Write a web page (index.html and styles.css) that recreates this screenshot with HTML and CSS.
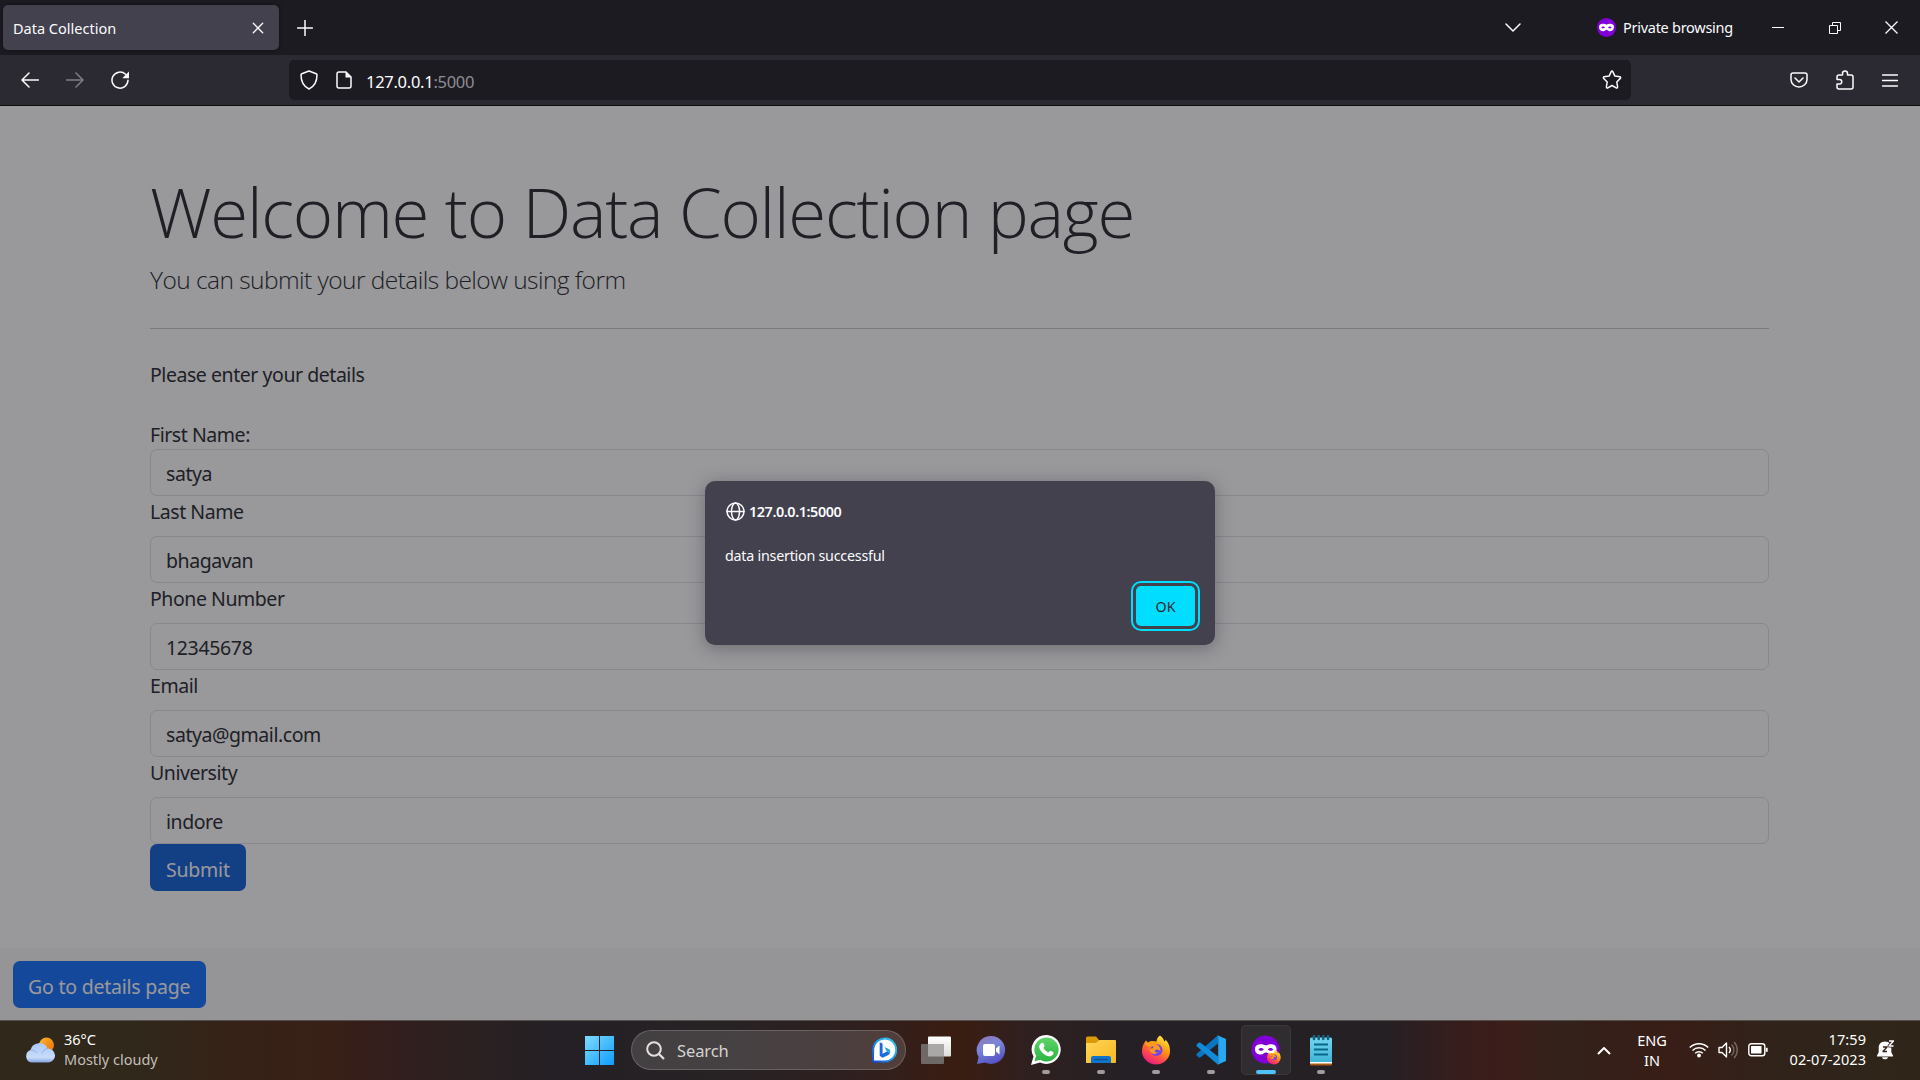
FILE: index.html
```
<!DOCTYPE html>
<html lang="en">
<head>
<meta charset="utf-8">
<title>Data Collection</title>
<link rel="stylesheet" href="styles.css">
</head>
<body>
<div class="desktop">
  <header class="tabstrip">
    <div class="tab"><span class="tab-title">Data Collection</span>
      <svg class="tab-close" width="12" height="12" viewBox="0 0 12 12"><path d="M1.3 1.3l9.4 9.4M10.7 1.3l-9.4 9.4"/></svg>
    </div>
    <svg class="new-tab" width="16" height="16" viewBox="0 0 16 16"><path d="M8 .5v15M.5 8h15"/></svg>
    <div class="window-tools">
      <svg class="all-tabs" width="16" height="10" viewBox="0 0 16 10"><path d="M1 1l7 7 7-7"/></svg>
      <div class="private">
        <svg width="19" height="19" viewBox="0 0 19 19"><circle cx="9.5" cy="9.5" r="9.5" fill="#8000d7" stroke="none"/><path d="M9.5 6.7C7.7 5.5 2 4.600 2 9.100c0 3 2 4.200 4.200 4.200 1.700 0 2.300-1.500 3.300-1.500s1.600 1.500 3.300 1.500c2.200 0 4.200-1.200 4.200-4.200 0-4.500-5.700-3.600-7.500-2.400z" fill="#fff" stroke="none"/><path d="M4.300 9.400c1-1.300 2.700-1.300 3.700 0-1 1.200-2.700 1.200-3.700 0zM11 9.400c1-1.300 2.700-1.300 3.700 0-1 1.200-2.700 1.200-3.700 0z" fill="#8000d7" stroke="none"/></svg>
        <span>Private browsing</span>
      </div>
      <svg class="win-min" width="12" height="12" viewBox="0 0 12 12"><path d="M0 5.500h12"/></svg>
      <svg class="win-restore" width="12" height="12" viewBox="0 0 12 12"><path d="M.5 3.500h8v8h-8zM3.500 3.500v-3h8v8h-3"/></svg>
      <svg class="win-close" width="13" height="13" viewBox="0 0 13 13"><path d="M.5.5l12 12M12.500.5l-12 12"/></svg>
    </div>
  </header>

  <nav class="toolbar">
    <div class="nav-buttons">
      <svg width="18" height="16" viewBox="0 0 18 16"><path d="M17.500 8H1M8 1L1 8l7 7"/></svg>
      <svg class="disabled" width="18" height="16" viewBox="0 0 18 16"><path d="M.5 8H17M10 1l7 7-7 7"/></svg>
      <svg width="18" height="18" viewBox="0 0 18 18"><path d="M17 9.300A8 8 0 1 1 14.500 3.300"/><path d="M18 .5v6.700h-6.700z" fill="#fbfbfe" stroke="none"/></svg>
    </div>
    <div class="urlbar">
      <svg width="18" height="20" viewBox="0 0 18 20"><path d="M9 1l7.200 2.700c.5.200.8.600.8 1.100 0 6-1.500 11.200-8 14.200C2.500 16 1 10.800 1 4.800c0-.5.300-.9.800-1.100z"/></svg>
      <svg class="doc" width="16" height="18" viewBox="0 0 16 18"><path d="M10 1H3a2 2 0 0 0-2 2v12a2 2 0 0 0 2 2h10a2 2 0 0 0 2-2V6z"/><path d="M9.500.5v6H15.500z" fill="#fbfbfe" stroke="none"/></svg>
      <span class="url">127.0.0.1<span class="port">:5000</span></span>
      <svg class="star" width="20" height="20" viewBox="0 0 20 20"><path d="M9.200 1.600a.9.900 0 0 1 1.600 0l2.100 4.500 4.900.7c.8.100 1.100 1 .5 1.600L14.800 12l.8 4.900c.1.800-.7 1.400-1.400 1L10 15.500l-4.200 2.400c-.7.400-1.500-.2-1.400-1L5.200 12 1.700 8.400c-.6-.6-.3-1.500.5-1.600l4.900-.7z"/></svg>
    </div>
    <div class="ext-buttons">
      <svg width="18" height="16" viewBox="0 0 18 16"><path d="M3 1h12a2 2 0 0 1 2 2v4.500a8 7.500 0 0 1-16 0V3a2 2 0 0 1 2-2z"/><path d="M5 6l4 4 4-4"/></svg>
      <svg width="18" height="20" viewBox="0 0 18 20"><path d="M6.500 5V3.500a2.500 2.500 0 0 1 5 0V5H15a2 2 0 0 1 2 2v10a2 2 0 0 1-2 2H3a2 2 0 0 1-2-2v-3h2.500a2.200 2.200 0 0 0 0-4.500H1V7a2 2 0 0 1 2-2z"/></svg>
      <svg width="16" height="13" viewBox="0 0 16 13"><path d="M.5 1h15M.5 6.500h15M.5 12h15"/></svg>
    </div>
  </nav>

  <main class="viewport">
    <section class="jumbotron">
      <h1 class="display">Welcome to Data Collection page</h1>
      <p class="lead">You can submit your details below using form</p>
      <hr class="rule">
      <p class="intro">Please enter your details</p>
      <form class="form">
        <div class="field first"><label class="label">First Name:</label><div class="control">satya</div></div>
        <div class="field"><label class="label">Last Name</label><div class="control">bhagavan</div></div>
        <div class="field"><label class="label">Phone Number</label><div class="control digits">12345678</div></div>
        <div class="field"><label class="label">Email</label><div class="control">satya@gmail.com</div></div>
        <div class="field"><label class="label">University</label><div class="control">indore</div></div>
        <button type="button" class="btn btn-submit">Submit</button>
      </form>
    </section>
    <div class="below"><button type="button" class="btn">Go to details page</button></div>
    <div class="backdrop">
      <div class="dialog">
        <div class="dialog-head">
          <svg width="19" height="19" viewBox="0 0 19 19"><circle cx="9.500" cy="9.500" r="8.500"/><ellipse cx="9.500" cy="9.500" rx="4" ry="8.500"/><path d="M1 9.500h17"/></svg>
          <span>127.0.0.1:5000</span>
        </div>
        <p class="dialog-text">data insertion successful</p>
        <button type="button" class="ok">OK</button>
      </div>
    </div>
  </main>

  <footer class="taskbar">
    <div class="weather">
      <svg width="30" height="26" viewBox="0 0 30 26">
        <defs>
          <linearGradient id="sun" x1="0" y1="0" x2="1" y2="1"><stop offset="0" stop-color="#fbb829"/><stop offset="1" stop-color="#ee6a10"/></linearGradient>
          <linearGradient id="cloud" x1="0" y1="0" x2="0" y2="1"><stop offset="0" stop-color="#aac9f8"/><stop offset=".75" stop-color="#c9dcf9"/><stop offset="1" stop-color="#7f9fe0"/></linearGradient>
        </defs>
        <circle cx="21.500" cy="8" r="7.500" fill="url(#sun)"/>
        <path d="M6.500 25.500a6.500 6.500 0 0 1-1-12.500 9 9 0 0 1 17-1.500 7 7 0 0 1 1 14z" fill="url(#cloud)"/>
        <path d="M5.500 13a7 7 0 0 1 6.500 3M17 16.500a7 7 0 0 1 6-5" fill="none" stroke="#8fb0ea" stroke-width="1"/>
      </svg>
      <div class="weather-text"><span>36°C</span><span class="dim">Mostly cloudy</span></div>
    </div>

    <div class="apps">
      <svg class="start" width="29" height="29" viewBox="0 0 29 29"><defs><linearGradient id="win" x1="0" y1="0" x2="1" y2="1" gradientUnits="objectBoundingBox"><stop offset="0" stop-color="#7edcff"/><stop offset="1" stop-color="#0f9bff"/></linearGradient></defs><path d="M0 0h14v14H0zM15 0h14v14H15zM0 15h14v14H0zM15 15h14v14H15z" fill="url(#win)"/></svg>
      <div class="search">
        <svg width="19" height="19" viewBox="0 0 19 19"><circle cx="8" cy="8" r="6.800" fill="none" stroke="#e4e0df" stroke-width="2"/><path d="M13 13l5 5" stroke="#e4e0df" stroke-width="2.200"/></svg>
        <span>Search</span>
        <svg class="bing" width="25" height="26" viewBox="0 0 26 26"><defs><linearGradient id="bg" x1="0" y1="1" x2="1" y2="0"><stop offset="0" stop-color="#1846d8"/><stop offset=".5" stop-color="#1c9df0"/><stop offset="1" stop-color="#38c8f0"/></linearGradient></defs><path d="M1 25l.3-13A12 12 0 1 1 13.500 25z" fill="#fff" stroke="url(#bg)" stroke-width="2"/><path d="M8 5l3 1.200V17l2.500-1.500 2.500-1-2-4 4.500 2.500c1 3-.3 4.500-2 5.500L11 21l-3-2z" fill="#1d6be0"/><path d="M13 10l5.500 2.700c.8 1.500.5 3-.3 4l-3-2.500z" fill="#27a6e8"/></svg>
      </div>
      <div class="app"><svg width="30" height="28" viewBox="0 0 30 28"><defs><linearGradient id="tv" x1="0" y1="0" x2="0" y2="1"><stop offset="0" stop-color="#fff"/><stop offset="1" stop-color="#ddd"/></linearGradient></defs><rect x="7" y=".5" width="23" height="20" rx="1" fill="url(#tv)"/><rect x="0" y="8" width="23" height="20" rx="1" fill="#6c6967"/><path d="M7 8h16v12.500H7z" fill="#aaa8a7"/></svg></div>
      <div class="app"><svg width="30" height="30" viewBox="0 0 30 30"><defs><linearGradient id="chat" x1=".2" y1="0" x2=".6" y2="1"><stop offset="0" stop-color="#8e77b8"/><stop offset=".4" stop-color="#7987d9"/><stop offset="1" stop-color="#5451c4"/></linearGradient></defs><path d="M15 1a14 14 0 1 1-6 26.600L1 29l1.600-7A14 14 0 0 1 15 1z" fill="url(#chat)"/><rect x="7" y="9" width="12" height="12" rx="2" fill="#fff"/><path d="M20 13.500l3.500-3v9l-3.500-3z" fill="#fff"/></svg></div>
      <div class="app open"><svg width="32" height="32" viewBox="0 0 32 32"><defs><linearGradient id="wa" x1="0" y1="0" x2="0" y2="1"><stop offset="0" stop-color="#5fd468"/><stop offset="1" stop-color="#2cb443"/></linearGradient></defs><path d="M16.500 1A14.500 14.500 0 1 1 10 28.600L1 31l2.500-8.500A14.500 14.500 0 0 1 16.500 1z" fill="#fff"/><path d="M16.500 3.500a12 12 0 1 1-6.200 22.200L4.500 27.300l1.700-5.500A12 12 0 0 1 16.500 3.500z" fill="url(#wa)"/><path d="M11.500 9c1.500-.8 2.200.3 3 2.500.4 1-1.300 2-1 2.500 1 2 2.600 3.500 4.800 4.400.6.200 1.500-1.900 2.100-1.600 1 .5 2.700 1.200 3 1.600.4 1-.8 4.100-4.400 3.800C13 21.500 9 15 9.200 12.500c.1-1.500 1-2.800 2.300-3.500z" fill="#fff"/></svg></div>
      <div class="app open"><svg width="30" height="28" viewBox="0 0 30 28"><defs><linearGradient id="fo" x1="0" y1="0" x2="1" y2="1"><stop offset="0" stop-color="#ffd65b"/><stop offset="1" stop-color="#f8b81c"/></linearGradient></defs><path d="M0 2a1.500 1.500 0 0 1 1.500-1.500H10L13 4v6H0z" fill="#dc9a08"/><path d="M0 7h10l3.500-3H29a1 1 0 0 1 1 1v21a1 1 0 0 1-1 1H0z" fill="url(#fo)"/><path d="M5 27v-5a2 2 0 0 1 2-2h16a2 2 0 0 1 2 2v5z" fill="#0f74cc"/><path d="M8.500 23.500h13" stroke="#0a4f93" stroke-width="1.300"/></svg></div>
      <div class="app open"><svg width="30" height="30" viewBox="0 0 30 30"><defs><linearGradient id="ff" x1=".8" y1="0" x2=".25" y2="1"><stop offset="0" stop-color="#fff04a"/><stop offset=".4" stop-color="#ff980e"/><stop offset=".7" stop-color="#ff4a4c"/><stop offset="1" stop-color="#e31587"/></linearGradient><g id="fox"><path d="M19 .5c3 2 4 4.500 4.300 6 .9-.3 1.200-1 1.200-2C28 8 29 12 29 16a14 13.500 0 0 1-28 0C1 11.500 2.500 8.500 5 5.500L6.500 8c2-1.800 3.500-2 5-2l4 .5c.2-2.500 1-4.500 3.500-6z" fill="url(#ff)"/><circle cx="15.500" cy="15" r="6" fill="#7542e5"/><path d="M5 5.500C4 9 5 10.500 8 11.500h5c-1 2.500-4 2-4.500 3C10 20 15 20 17 17c-3 1.500-4-1-2.500-2 2-1.300 4 0 5 1 0-5-3.500-7.500-8-8l-5-.5z" fill="#ff9a1e"/></g></defs><use href="#fox"/></svg></div>
      <div class="app open"><svg width="30" height="30" viewBox="0 0 30 30"><path d="M22 .3L1 18.500c-.8.700-.8 1.600 0 2.300l1.500 1.400c.6.500 1.300.5 2 0L22 8.500z" fill="#0a76c2"/><path d="M22 29.700L1 11.500c-.8-.7-.8-1.600 0-2.300l1.500-1.400c.6-.5 1.300-.5 2 0L22 21.500z" fill="#118bd8"/><path d="M21.500.2L30 4v22l-8.500 3.800c.5-.3.700-.8.700-1.500v-26c0-.8-.2-1.600-.7-2.100z" fill="#29a8f2"/></svg></div>
      <div class="app open active"><svg width="30" height="30" viewBox="0 0 30 30"><circle cx="14.500" cy="14.500" r="14" fill="#8000d7"/><path d="M15 10.500C12 8.500 4 8 4 14c0 4 2.500 5.500 5.500 5.500 2.700 0 3.800-2 5.500-2s2.800 2 5.500 2c3 0 5-1.500 5-5.500 0-6-7.500-5.500-10.500-3.500z" fill="#fff"/><path d="M7.500 14.500c1.200-2 4-2 5.200 0-1.200 1.700-4 1.700-5.200 0zM17 14.500c1.200-2 4-2 5.200 0-1.200 1.700-4 1.700-5.200 0z" fill="#8000d7"/><use href="#fox" transform="translate(15.500 15) scale(.49)"/></svg></div>
      <div class="app open"><svg width="22" height="31" viewBox="0 0 22 31"><defs><linearGradient id="np" x1="0" y1="0" x2="0" y2="1"><stop offset="0" stop-color="#73d6ee"/><stop offset="1" stop-color="#40b4d8"/></linearGradient></defs><path d="M0 26h22v3.500a1 1 0 0 1-1 1H1a1 1 0 0 1-1-1z" fill="#a85a16"/><path d="M0 25h22v3.500H0z" fill="#fff"/><path d="M0 4a1.500 1.500 0 0 1 1.500-1.500h19A1.500 1.500 0 0 1 22 4v23H0z" fill="url(#np)"/><path d="M4 9.500h14M4 14.500h14M4 19.500h14" stroke="#0a6689" stroke-width="1.800"/><path d="M4 1v3M8.700 1v3M13.300 1v3M18 1v3" stroke="#14627f" stroke-width="2.600" stroke-linecap="round"/></svg></div>
    </div>

    <div class="tray">
      <svg class="tray-up" width="14" height="9" viewBox="0 0 14 9"><path d="M1 8l6-6 6 6"/></svg>
      <div class="lang"><span>ENG</span><span>IN</span></div>
      <svg width="20" height="16" viewBox="0 0 20 16"><circle cx="10" cy="13.500" r="1.900" fill="#fff" stroke="none"/><path d="M.8 5.500a13 13 0 0 1 18.400 0M3.500 8.500a9.200 9.200 0 0 1 13 0M6.200 11.300a5.400 5.400 0 0 1 7.600 0" stroke-width="1.500"/></svg>
      <svg class="vol" width="20" height="18" viewBox="0 0 20 18"><path d="M1 6.500h3L8.500 2v14L4 11.500H1z"/><path d="M11 6a4.500 4.500 0 0 1 0 6"/><path d="M13.500 3.500a7.500 7.500 0 0 1 0 11M16 1a11.500 11.500 0 0 1 0 16" stroke="#75665e"/></svg>
      <svg class="bat" width="20" height="14" viewBox="0 0 20 14"><rect x=".8" y=".8" width="16" height="12" rx="2.500"/><rect x="3" y="3" width="10.500" height="7.600" rx=".5" fill="#fff" stroke="none"/><path d="M18.700 4.800v4" stroke-width="2"/></svg>
      <div class="clock"><span>17:59</span><span>02-07-2023</span></div>
      <svg class="bell" width="18" height="20" viewBox="0 0 18 20"><path d="M8 1.500c4 0 6.300 2.800 6.300 6.300v4.500L16 15.500v1H0v-1l1.700-3.200V7.800C1.700 4.300 4 1.500 8 1.500zM5 17.300h6c-.5 2.700-5.500 2.700-6 0z" fill="#fff" stroke="none"/><path d="M6 7h4L6 11.500h4" stroke="#33221a" stroke-width="1.300"/><path d="M12 1h4.500L12 6h4.500" stroke="#33221a" stroke-width="3"/><path d="M12 1h4.500L12 6h4.500" stroke-width="1.400"/></svg>
    </div>
  </footer>
</div>
</body>
</html>
```
FILE: styles.css
```
* { box-sizing: border-box; }

body {
  margin: 0;
  font-family: "Noto Sans", "Liberation Sans", sans-serif;
  font-weight: 400;
}

svg { display: block; flex: none; }
button { border: 0; font-family: inherit; }
p, h1, hr { margin: 0; }

.desktop {
  display: flex;
  flex-direction: column;
  width: 1920px;
  height: 1080px;
  overflow: hidden;
}

/* Browser chrome */
.tabstrip {
  display: flex;
  align-items: center;
  height: 55px;
  padding-left: 3px;
  background: #1c1b22;
  color: #fbfbfe;
}
.tabstrip svg, .toolbar svg, .dialog svg {
  fill: none;
  stroke: #fbfbfe;
  stroke-width: 1.5;
  stroke-linecap: round;
  stroke-linejoin: round;
}
.tab {
  display: flex;
  align-items: center;
  justify-content: space-between;
  width: 276px;
  height: 45px;
  padding: 0 15px 0 10px;
  border-radius: 5px;
  background: #42414d;
  box-shadow: 0 0 4px rgba(0, 0, 0, .5);
  font-size: 14.5px;
}
.tabstrip .tab-close { stroke-width: 1.3; }
.new-tab { margin-left: 18px; }
.window-tools {
  display: flex;
  align-items: center;
  margin-left: auto;
  padding-right: 22px;
}
.private {
  display: flex;
  align-items: center;
  gap: 7px;
  width: 175px;
  margin-left: 76px;
  font-size: 14.5px;
  line-height: 20px;
  letter-spacing: -.27px;
}
.private span { margin-bottom: 1px; }
.tabstrip .win-min, .tabstrip .win-restore, .tabstrip .win-close {
  stroke-width: 1;
  stroke-linecap: butt;
  stroke-linejoin: miter;
}
.tabstrip .win-close { stroke-width: 1.3; }
.win-restore { margin-left: 45px; }
.win-close { margin-left: 44px; }

.toolbar {
  display: flex;
  align-items: center;
  height: 51px;
  border-bottom: 1px solid #0c0c0d;
  background: #2b2a33;
}
.nav-buttons {
  display: flex;
  align-items: center;
  gap: 27px;
  width: 289px;
  padding-left: 21px;
}
.toolbar .disabled { opacity: .4; }
.urlbar {
  display: flex;
  align-items: center;
  width: 1342px;
  height: 40px;
  padding: 0 9px 0 11px;
  border-radius: 5px;
  background: #1c1b22;
  color: #fbfbfe;
}
.doc { margin-left: 18px; }
.url {
  margin: 2px 0 0 14px;
  font-size: 16.5px;
  letter-spacing: -.28px;
}
.port { color: #8e8e93; }
.star { margin-left: auto; }
.ext-buttons {
  display: flex;
  align-items: center;
  gap: 28px;
  margin-left: auto;
  padding-right: 22px;
}

/* Page */
.viewport {
  position: relative;
  height: 914px;
  background: #f8f9fa;
  color: #212529;
}
.jumbotron {
  height: 842px;
  padding: 63px 151px 0 150px;
  background: #fff;
}
.display {
  font-family: "Open Sans", "Noto Sans", sans-serif;
  font-size: 69px;
  font-weight: 300;
  line-height: 84px;
  letter-spacing: -1.28px;
  white-space: nowrap;
}
.lead {
  margin-top: 8px;
  font-family: "Open Sans", "Noto Sans", sans-serif;
  font-size: 24.5px;
  font-weight: 300;
  line-height: 38px;
  letter-spacing: -.55px;
}
.rule {
  margin-top: 29px;
  border: 0;
  border-top: 1px solid #c7c8c9;
}
.intro, .label, .control {
  font-size: 19.5px;
  line-height: 30px;
  letter-spacing: -.45px;
}
.intro { margin-top: 31px; }
.form { margin-top: 30px; }
.label { display: block; margin-bottom: 9px; }
.first .label { margin-bottom: -1px; }
.field + .field .label { padding-top: 1px; }
.control {
  height: 47px;
  padding: 9px 15px 0;
  border: 1px solid #dee2e6;
  border-radius: 7px;
}
.digits { letter-spacing: -.35px; }
.btn {
  display: block;
  height: 47px;
  padding: 3px 16px 0 15px;
  border-radius: 7px;
  background: #0d6efd;
  color: #fff;
  font-size: 19.5px;
  letter-spacing: -.22px;
}
.btn-submit { padding-left: 16px; background: #0b5ed7; }
.below { padding: 13px; }

.backdrop {
  position: absolute;
  inset: 0;
  display: flex;
  align-items: center;
  justify-content: center;
  background: rgba(28, 27, 34, .45);
}
.dialog {
  display: flex;
  flex-direction: column;
  width: 510px;
  height: 164px;
  padding: 21px 20px 0 20px;
  border-radius: 10px;
  background: #42414d;
  box-shadow: 0 3px 18px rgba(28, 27, 34, .35);
  color: #fbfbfe;
}
.dialog-head {
  display: flex;
  align-items: center;
  gap: 4px;
  height: 19px;
  padding-left: 1px;
  font-size: 14.4px;
  font-weight: 600;
  letter-spacing: -.42px;
}
.dialog-text {
  margin-top: 25px;
  font-size: 14.3px;
  line-height: 20px;
  letter-spacing: -.24px;
}
.ok {
  align-self: flex-end;
  width: 59px;
  height: 40px;
  margin-top: 20px;
  padding: 0;
  border-radius: 5px;
  background: #0df;
  color: #2b2a33;
  font-size: 14.3px;
  outline: 2px solid #0df;
  outline-offset: 3px;
}

/* Taskbar */
.taskbar {
  display: flex;
  height: 60px;
  padding-bottom: 1px;
  border-top: 1px solid #55504b;
  background: linear-gradient(90deg, #2f281b 0, #2f281b 130px, #362217 230px, #382016 330px, #341e1e 390px, #2b2121 470px, #242025 560px, #272224 720px, #2f2020 850px, #3a1d12 960px, #2f2020 1030px, #242025 1130px, #242024 1380px, #351e1e 1450px, #3c1d19 1510px, #33211a 1560px, #381e17 1670px, #30231a 1780px, #2f2619 1920px);
  color: #fff;
}
.weather {
  display: flex;
  align-items: center;
  gap: 9px;
  width: 585px;
  padding-left: 25px;
}
.weather-text, .lang, .clock {
  display: flex;
  flex-direction: column;
  margin-bottom: 3px;
  font-size: 14.5px;
  line-height: 20px;
}
.dim { color: #c3bfba; }
.apps {
  display: flex;
  align-items: center;
}
.search {
  display: flex;
  align-items: center;
  width: 275px;
  height: 40px;
  margin: 0 5px 0 17px;
  padding: 0 8px 0 14px;
  border: 1px solid rgba(255, 255, 255, .18);
  border-radius: 20px;
  background: rgba(255, 255, 255, .14);
}
.search span {
  margin-left: 12px;
  color: #d6d2d0;
  font-size: 16.5px;
  letter-spacing: -.1px;
}
.bing { margin-left: auto; }
.app {
  position: relative;
  display: flex;
  align-items: center;
  justify-content: center;
  width: 50px;
  height: 50px;
  margin-right: 5px;
}
.open::after {
  content: "";
  position: absolute;
  left: 21px;
  bottom: 1px;
  width: 8px;
  height: 4px;
  border-radius: 2px;
  background: #a09c9b;
}
.active {
  border-radius: 5px;
  background: rgba(255, 255, 255, .06);
  box-shadow: inset 0 0 0 1px rgba(255, 255, 255, .06);
}
.active::after {
  left: 15px;
  width: 20px;
  background: #4cc2ff;
}
.tray {
  display: flex;
  align-items: center;
  margin-left: auto;
  padding-right: 25px;
}
.tray svg {
  fill: none;
  stroke: #fff;
  stroke-width: 1.4;
  stroke-linejoin: round;
}
.tray .tray-up { stroke-width: 2; }
.lang {
  align-items: center;
  width: 30px;
  margin: 0 22px 1px 26px;
}
.vol { margin-left: 9px; }
.bat { margin-left: 10px; }
.clock {
  align-items: flex-end;
  width: 78px;
  margin-left: 20px;
  letter-spacing: .07px;
}
.bell { margin-left: 11px; }
```
